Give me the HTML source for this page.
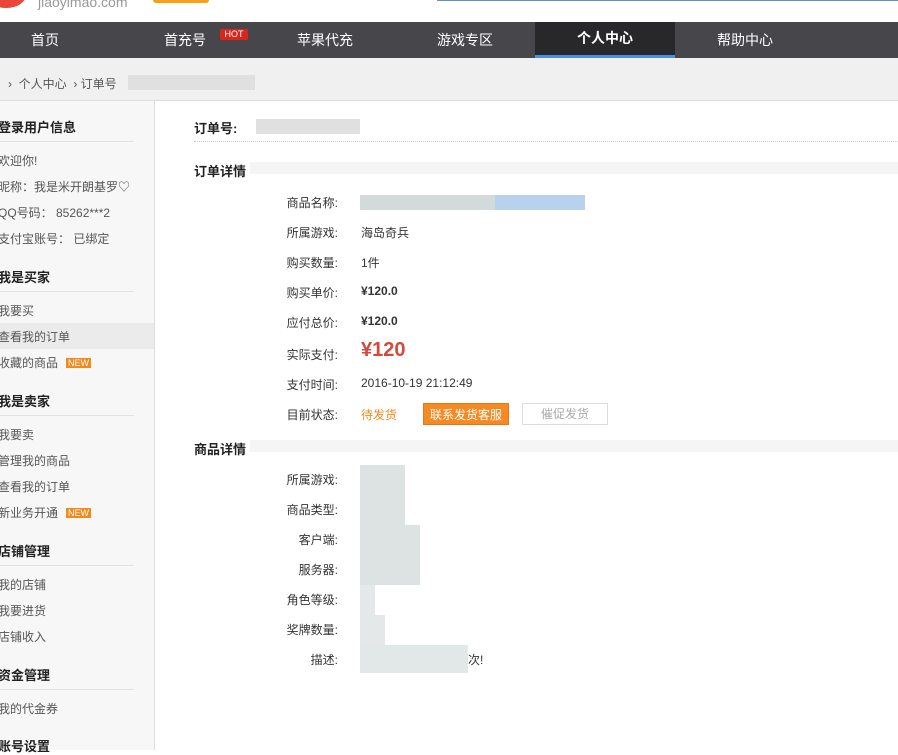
<!DOCTYPE html>
<html><head><meta charset="utf-8"><style>
*{margin:0;padding:0;box-sizing:border-box}
body{width:898px;height:750px;overflow:hidden;background:#fff;font-family:"Liberation Sans","Noto Sans CJK SC",sans-serif;font-size:12px;color:#333;position:relative}
.a{position:absolute;white-space:nowrap}
.nav{position:absolute;top:22px;left:0;width:898px;height:36px;background:#47474b}
.nav div{position:absolute;top:0;width:140px;height:36px;line-height:36px;text-align:center;color:#fff;font-size:14px}
.crumb{position:absolute;top:58px;left:0;width:898px;height:43px;background:#f0f0f0;border-bottom:1px solid #ddd}
.side{position:absolute;top:101px;left:0;width:155px;height:649px;background:#f7f7f7;border-right:1px solid #ddd}
.h{position:absolute;left:-2px;font-weight:bold;font-size:13px;color:#222}
.ln{position:absolute;left:0;width:134px;border-top:1px solid #e2e2e2}
.it{position:absolute;left:-2px;color:#555;font-size:12px}
.new{display:inline-block;background:#f08a1c;color:#fff;font-size:9px;line-height:10px;padding:0 2px;margin-left:8px;vertical-align:1px}
.lb{position:absolute;width:80px;left:258px;text-align:right;color:#333}
.v{position:absolute;left:361px;color:#333}
.b{position:absolute;background:#dde3e3}
</style></head><body>
<div class="a" style="left:-14px;top:-18px;width:40px;height:26px;border-radius:50%;background:#e8473a"></div>
<div class="a" style="left:38px;top:-6px;color:#999;font-size:14px">jiaoyimao.com</div>
<div class="a" style="left:153px;top:0;width:56px;height:3px;background:#f7a11a;border-radius:0 0 4px 4px"></div>
<div class="a" style="left:437px;top:0;width:461px;height:1px;background:#6a8cc8"></div>
<div class="nav">
<div style="left:-25px">首页</div>
<div style="left:115px">首充号</div>
<div class="a" style="left:220px;top:7px;width:28px;height:11px;line-height:11px;background:#d9261c;color:#fff;font-size:9px;border-radius:2px">HOT</div>
<div style="left:255px">苹果代充</div>
<div style="left:395px">游戏专区</div>
<div style="left:535px;background:#28282a;font-weight:bold;height:33px;line-height:33px">个人中心</div>
<div style="left:535px;top:33px;height:3px;background:#4a90e2"></div>
<div style="left:675px">帮助中心</div>
</div>
<div class="crumb">
<div class="a" style="left:8px;top:17px;color:#555">›&nbsp;&nbsp;个人中心&nbsp;&nbsp;›&nbsp;订单号</div>
<div class="a" style="left:128px;top:17px;width:127px;height:15px;background:#e0e0e0"></div>
</div>
<div class="side">
<div class="h" style="top:16px">登录用户信息</div><div class="ln" style="top:40px"></div>
<div class="it" style="top:51px">欢迎你!</div>
<div class="it" style="top:77px">昵称：我是米开朗基罗♡</div>
<div class="it" style="top:103px">QQ号码： 85262***2</div>
<div class="it" style="top:129px">支付宝账号： 已绑定</div>
<div class="h" style="top:166px">我是买家</div><div class="ln" style="top:190px"></div>
<div class="it" style="top:201px">我要买</div>
<div class="a" style="left:0;top:222px;width:154px;height:26px;background:#ebebeb"></div>
<div class="it" style="top:227px">查看我的订单</div>
<div class="it" style="top:253px">收藏的商品<span class="new">NEW</span></div>
<div class="h" style="top:290px">我是卖家</div><div class="ln" style="top:314px"></div>
<div class="it" style="top:325px">我要卖</div>
<div class="it" style="top:351px">管理我的商品</div>
<div class="it" style="top:377px">查看我的订单</div>
<div class="it" style="top:403px">新业务开通<span class="new">NEW</span></div>
<div class="h" style="top:440px">店铺管理</div><div class="ln" style="top:464px"></div>
<div class="it" style="top:475px">我的店铺</div>
<div class="it" style="top:501px">我要进货</div>
<div class="it" style="top:527px">店铺收入</div>
<div class="h" style="top:564px">资金管理</div><div class="ln" style="top:588px"></div>
<div class="it" style="top:599px">我的代金券</div>
<div class="h" style="top:635px">账号设置</div>
</div>
<div class="a" style="left:194px;top:118px;font-weight:bold;font-size:13px;color:#222">订单号:</div>
<div class="a" style="left:256px;top:119px;width:104px;height:15px;background:#e0e0e0"></div>
<div class="a" style="left:194px;top:141px;width:704px;border-top:1px dotted #ccc"></div>
<div class="a" style="left:250px;top:162px;width:648px;height:12px;background:#f5f5f5"></div>
<div class="a" style="left:194px;top:161px;font-weight:bold;font-size:13px;color:#222">订单详情</div>
<div class="lb" style="top:194px">商品名称:</div>
<div class="b" style="left:360px;top:195px;width:135px;height:15px;background:#d2dada"></div>
<div class="b" style="left:495px;top:195px;width:90px;height:15px;background:#b8d2ee"></div>
<div class="lb" style="top:224px">所属游戏:</div><div class="v" style="top:224px">海岛奇兵</div>
<div class="lb" style="top:254px">购买数量:</div><div class="v" style="top:254px">1件</div>
<div class="lb" style="top:284px">购买单价:</div><div class="v" style="top:284px;font-weight:bold">¥120.0</div>
<div class="lb" style="top:314px">应付总价:</div><div class="v" style="top:314px;font-weight:bold">¥120.0</div>
<div class="lb" style="top:346px">实际支付:</div><div class="v" style="top:339px;font-weight:bold;font-size:20px;color:#d5483c">¥120</div>
<div class="lb" style="top:376px">支付时间:</div><div class="v" style="top:376px">2016-10-19 21:12:49</div>
<div class="lb" style="top:406px">目前状态:</div><div class="v" style="top:406px;color:#f08a1c">待发货</div>
<div class="a" style="left:423px;top:403px;width:86px;height:22px;line-height:22px;text-align:center;background:#f58a24;color:#fff;border:1px solid #e57a14">联系发货客服</div>
<div class="a" style="left:522px;top:403px;width:86px;height:22px;line-height:20px;text-align:center;color:#aaa;border:1px solid #ddd">催促发货</div>
<div class="a" style="left:250px;top:440px;width:648px;height:12px;background:#f5f5f5"></div>
<div class="a" style="left:194px;top:439px;font-weight:bold;font-size:13px;color:#222">商品详情</div>
<div class="lb" style="top:471px">所属游戏:</div>
<div class="lb" style="top:501px">商品类型:</div>
<div class="lb" style="top:531px">客户端:</div>
<div class="lb" style="top:561px">服务器:</div>
<div class="lb" style="top:591px">角色等级:</div>
<div class="lb" style="top:621px">奖牌数量:</div>
<div class="lb" style="top:651px">描述:</div>
<div class="b" style="left:360px;top:465px;width:45px;height:60px"></div>
<div class="b" style="left:360px;top:525px;width:60px;height:60px"></div>
<div class="b" style="left:360px;top:585px;width:15px;height:30px;background:#e4e8e8"></div>
<div class="b" style="left:360px;top:615px;width:25px;height:30px;background:#e4e8e8"></div>
<div class="b" style="left:360px;top:645px;width:108px;height:28px;background:#e2e7e7"></div>
<div class="v" style="left:468px;top:651px">次!</div>
</body></html>
